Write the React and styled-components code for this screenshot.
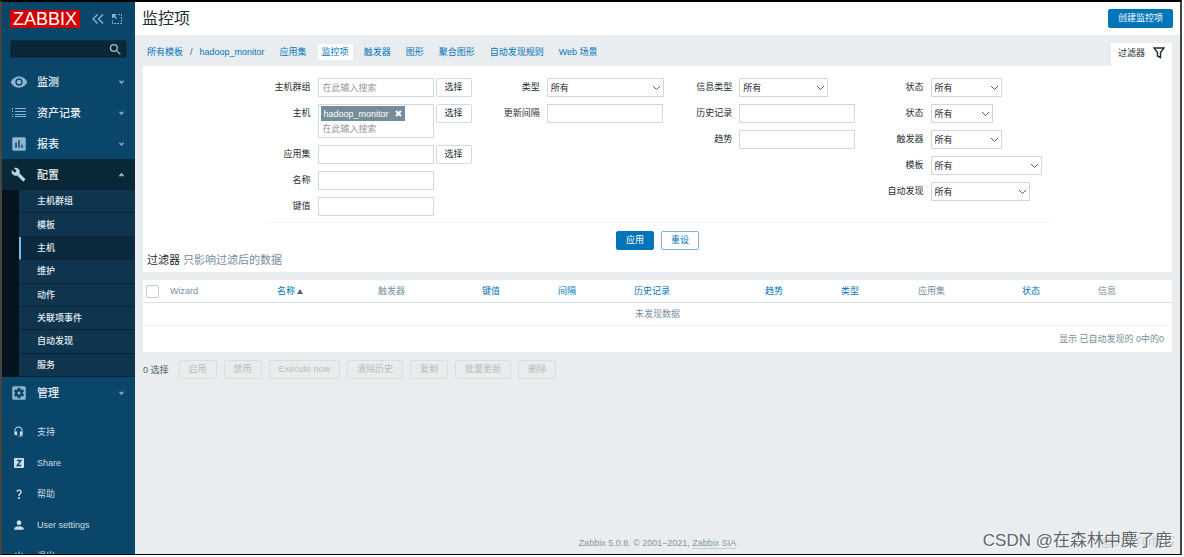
import React, { useState } from 'react';
import styled, { createGlobalStyle, css } from 'styled-components';
import {
  MdAssessment,
  MdBuild,
  MdHeadsetMic,
  MdPerson,
  MdPowerSettingsNew,
  MdQuestionMark,
  MdSearch,
  MdSettingsApplications,
  MdVisibility,
} from 'react-icons/md';

const ListIcon = () => (
  <svg width="14" height="10" viewBox="0 0 14 10" fill="currentColor">
    <path d="M0 0h1v2H0zM3 0h11v1H3zM0 3h1v1H0zM3 3h11v1H3zM0 6h1v1H0zM3 6h11v1H3zM0 8h1v1H0zM3 8h11v1H3z" />
  </svg>
);

const ShareIcon = () => (
  <svg width="10" height="10" viewBox="0 0 10 10">
    <rect width="10" height="10" rx="1" fill="currentColor" />
    <path d="M3 2.5h4L3.2 7.5H7.2" fill="none" stroke="#0a466a" strokeWidth="1.3" />
  </svg>
);

const Chevron = ({ up }) => (
  <svg width="5" height="4" viewBox="0 0 5 4" fill="none" stroke="currentColor" strokeWidth="1.3">
    <path d={up ? 'M.5 3.2l2-2.200 2 2.200' : 'M.5 .8l2 2.200 2-2.200'} />
  </svg>
);

const MENU = [
  { title: '监测', icon: <MdVisibility size={18} /> },
  { title: '资产记录', icon: <ListIcon /> },
  { title: '报表', icon: <MdAssessment size={18} /> },
  {
    title: '配置',
    icon: <MdBuild size={15} />,
    items: ['主机群组', '模板', '主机', '维护', '动作', '关联项事件', '自动发现', '服务'],
    selected: '主机',
  },
  { title: '管理', icon: <MdSettingsApplications size={18} /> },
];

const USER_MENU = [
  { title: '支持', icon: <MdHeadsetMic size={11} /> },
  { title: 'Share', icon: <ShareIcon /> },
  { title: '帮助', icon: <MdQuestionMark size={12} /> },
  { title: 'User settings', icon: <MdPerson size={14} /> },
  { title: '退出', icon: <MdPowerSettingsNew size={12} /> },
];

const TABS = ['应用集', '监控项', '触发器', '图形', '聚合图形', '自动发现规则', 'Web 场景'];

const COLUMNS = [
  { title: 'Wizard', width: 107 },
  { title: '名称', width: 101, sortable: true, sorted: true },
  { title: '触发器', width: 104 },
  { title: '键值', width: 76, sortable: true },
  { title: '间隔', width: 76, sortable: true },
  { title: '历史记录', width: 131, sortable: true },
  { title: '趋势', width: 76, sortable: true },
  { title: '类型', width: 77, sortable: true },
  { title: '应用集', width: 104 },
  { title: '状态', width: 76, sortable: true },
  { title: '信息', width: 79 },
];

const ACTIONS = ['启用', '禁用', 'Execute now', '清除历史', '复制', '批量更新', '删除'];

const SelectField = ({ id, label, width }) => (
  <>
    <Label htmlFor={id}>{label}</Label>
    <SelectBox $width={width}>
      <Select id={id} defaultValue="all">
        <option value="all">所有</option>
      </Select>
      <svg width="9" height="6" viewBox="0 0 9 6" fill="none" stroke="#52626c">
        <path d="M1 1l3.5 3.5L8 1" />
      </svg>
    </SelectBox>
  </>
);

const TextField = ({ id, label }) => (
  <>
    <Label htmlFor={id}>{label}</Label>
    <TextInput id={id} type="text" />
  </>
);

const PickerField = ({ id, label, placeholder, tag, onRemove }) => (
  <>
    <Label htmlFor={id}>{label}</Label>
    <Picker>
      <MultiSelect>
        {tag && (
          <Tag>
            {tag}
            <TagRemove type="button" aria-label="移除" onClick={onRemove}>
              <svg width="7" height="7" viewBox="0 0 7 7" stroke="#fff" strokeWidth="2">
                <path d="M1 1l5 5M6 1L1 6" />
              </svg>
            </TagRemove>
          </Tag>
        )}
        <MultiSelectInput id={id} type="text" placeholder={placeholder} />
      </MultiSelect>
      <Button type="button" $variant="grey">选择</Button>
    </Picker>
  </>
);

const Sidebar = () => (
  <SidebarContainer>
    <SidebarHeader>
      <Logo href="#">ZABBIX</Logo>
      <HeaderButton type="button" aria-label="收起">
        <svg width="12" height="10" viewBox="0 0 12 10" fill="none" stroke="currentColor" strokeWidth="1.3">
          <path d="M5.5 .5L1 5l4.5 4.5M11 .5L6.5 5l4.5 4.5" />
        </svg>
      </HeaderButton>
      <HeaderButton type="button" aria-label="隐藏">
        <svg width="10" height="10" viewBox="0 0 10 10" fill="none" stroke="currentColor">
          <path d="M6 .5h3.5v9H.5V6" strokeDasharray="2 1" />
          <path d="M.7 4V.7H4M1 1l3.500 3.500" strokeWidth="1.4" />
        </svg>
      </HeaderButton>
    </SidebarHeader>
    <SearchForm role="search">
      <SearchInput type="text" aria-label="搜索" />
      <MdSearch size={15} />
    </SearchForm>
    <nav>
      {MENU.map(({ title, icon, items, selected }) => (
        <React.Fragment key={title}>
          <MenuLink href="#" $active={!!items}>
            <IconContainer>{icon}</IconContainer>
            <MenuTitle>{title}</MenuTitle>
            <Chevron up={!!items} />
          </MenuLink>
          {items && (
            <SubMenu>
              {items.map((item) => (
                <SubMenuLink key={item} href="#" $selected={item === selected}>
                  {item}
                </SubMenuLink>
              ))}
            </SubMenu>
          )}
        </React.Fragment>
      ))}
    </nav>
    <UserNav>
      {USER_MENU.map(({ title, icon }) => (
        <UserLink key={title} href="#">
          <IconContainer>{icon}</IconContainer>
          {title}
        </UserLink>
      ))}
    </UserNav>
  </SidebarContainer>
);

const Filter = () => {
  const [host, setHost] = useState('hadoop_monitor');

  return (
    <FilterPanel>
      <FilterForm>
        <Fields>
          <FieldColumn>
            <PickerField id="groups" label="主机群组" placeholder="在此输入搜索" />
            <PickerField
              id="hosts"
              label="主机"
              placeholder="在此输入搜索"
              tag={host}
              onRemove={() => setHost('')}
            />
            <PickerField id="application" label="应用集" />
            <TextField id="name" label="名称" />
            <TextField id="key" label="键值" />
          </FieldColumn>
          <FieldColumn>
            <SelectField id="type" label="类型" width={117} />
            <TextField id="delay" label="更新间隔" />
          </FieldColumn>
          <FieldColumn>
            <SelectField id="value_type" label="信息类型" width={89} />
            <TextField id="history" label="历史记录" />
            <TextField id="trends" label="趋势" />
          </FieldColumn>
          <FieldColumn>
            <SelectField id="state" label="状态" width={71} />
            <SelectField id="status" label="状态" width={62} />
            <SelectField id="with_triggers" label="触发器" width={71} />
            <SelectField id="templated" label="模板" width={111} />
            <SelectField id="discovery" label="自动发现" width={99} />
          </FieldColumn>
        </Fields>
        <FormButtons>
          <Button type="button">应用</Button>
          <Button type="button" $variant="outline">重设</Button>
        </FormButtons>
      </FilterForm>
      <Hint>
        <strong>过滤器</strong> 只影响过滤后的数据
      </Hint>
    </FilterPanel>
  );
};

const ItemsTable = () => (
  <Table>
    <colgroup>
      <col width="22" />
      {COLUMNS.map(({ title, width }) => (
        <col key={title} width={width} />
      ))}
    </colgroup>
    <thead>
      <tr>
        <HeadCell $check>
          <Checkbox type="checkbox" aria-label="全选" />
        </HeadCell>
        {COLUMNS.map(({ title, sortable, sorted }) => (
          <HeadCell key={title}>
            {sortable ? <Link href="#">{title}</Link> : title}
            {sorted && (
              <SortArrow width="6" height="5" viewBox="0 0 6 5">
                <path d="M3 0l3 5H0z" fill="#52626c" />
              </SortArrow>
            )}
          </HeadCell>
        ))}
      </tr>
    </thead>
    <tbody>
      <tr>
        <EmptyCell colSpan={12}>未发现数据</EmptyCell>
      </tr>
    </tbody>
    <tfoot>
      <tr>
        <StatsCell colSpan={12}>显示 已自动发现的 0中的0</StatsCell>
      </tr>
    </tfoot>
  </Table>
);

const App = () => (
  <>
    <GlobalStyle />
    <Frame>
      <Sidebar />
      <Main>
        <PageHeader>
          <Title>监控项</Title>
          <Button type="button">创建监控项</Button>
        </PageHeader>
        <TopBar>
          <Breadcrumbs>
            <Link href="#">所有模板</Link>
            <span>/</span>
            <Link href="#">hadoop_monitor</Link>
          </Breadcrumbs>
          <Tabs>
            {TABS.map((tab) => (
              <Tab key={tab} href="#" $active={tab === '监控项'}>
                {tab}
              </Tab>
            ))}
          </Tabs>
          <FilterTab type="button">
            过滤器
            <svg width="12" height="12" viewBox="0 0 12 12" fill="none" stroke="#1f2c33" strokeWidth="1.4">
              <path d="M1 1h10L7.5 5.5v5L4.5 9V5.5z" />
            </svg>
          </FilterTab>
        </TopBar>
        <Content>
          <Filter />
          <ItemsTable />
          <ActionBar>
            <Selected>0 选择</Selected>
            {ACTIONS.map((action) => (
              <Button key={action} type="button" $variant="disabled" disabled>
                {action}
              </Button>
            ))}
          </ActionBar>
        </Content>
        <Footer>
          Zabbix 5.0.8. © 2001–2021, <a href="#">Zabbix SIA</a>
        </Footer>
      </Main>
      <SiteMark>@51CTO博客</SiteMark>
      <AuthorMark>CSDN @在森林中麋了鹿</AuthorMark>
    </Frame>
  </>
);

const GlobalStyle = createGlobalStyle`
  * {
    box-sizing: border-box;
  }

  body {
    margin: 0;
    background: #fff;
    color: #1f2c33;
    font-family: "Liberation Sans", "Noto Sans CJK SC", sans-serif;
    font-size: 9px;
    line-height: 14px;
  }

  button,
  input,
  select {
    margin: 0;
    font: inherit;
    color: inherit;
  }

  a {
    color: inherit;
    text-decoration: none;
  }

  svg {
    flex-shrink: 0;
  }
`;

const Frame = styled.div`
  position: relative;
  display: flex;
  height: calc(100vh - 2px);
  margin-right: 2px;
  overflow: hidden;
  border: 2px solid #444;
  border-top-color: #000;
  border-bottom: 1px solid #000;
`;

const SidebarContainer = styled.aside`
  display: flex;
  flex-flow: column nowrap;
  flex-shrink: 0;
  width: 133px;
  background: #0a466a;
  color: #e3ecf2;
`;

const SidebarHeader = styled.div`
  display: flex;
  align-items: center;
  gap: 8px;
  padding: 8px 8px 12px;
`;

const Logo = styled.a`
  width: 70px;
  margin-right: 4px;
  background: #d40000;
  color: #fff;
  font-size: 18px;
  line-height: 18px;
  text-align: center;
`;

const HeaderButton = styled.button`
  display: flex;
  padding: 0;
  border: 0;
  background: none;
  color: #8fb5ce;
`;

const SearchForm = styled.form`
  display: flex;
  align-items: center;
  height: 19px;
  margin: 0 8px 8px;
  padding-right: 3px;
  border: 1px solid #0c2f44;
  border-radius: 2px;
  background: #0a2638;
  color: #a5bccb;
`;

const SearchInput = styled.input`
  flex: 1;
  min-width: 0;
  border: 0;
  outline: 0;
  background: none;
`;

const MenuLink = styled.a`
  display: flex;
  align-items: center;
  height: 31px;
  padding-right: 11px;
  background: ${({ $active }) => ($active ? '#0a2737' : 'none')};
  color: ${({ $active }) => ($active ? '#b9d8ea' : '#8fb5ce')};
`;

const IconContainer = styled.span`
  display: flex;
  justify-content: center;
  width: 35px;
  padding-right: 2px;
`;

const MenuTitle = styled.span`
  flex: 1;
  color: #e9f0f5;
  font-size: 11px;
  font-weight: 500;
`;

const SubMenu = styled.div`
  display: grid;
  grid-auto-rows: 1fr;
  height: 187px;
  padding-left: 17px;
  background: #04131d;
`;

const SubMenuLink = styled.a`
  display: flex;
  align-items: center;
  padding-left: 16px;
  border-left: 2px solid ${({ $selected }) => ($selected ? '#78bbe6' : '#0f344d')};
  border-bottom: 1px solid #0a2432;
  background: ${({ $selected }) => ($selected ? '#0c2a3d' : '#0f344d')};
  font-weight: 500;
`;

const UserNav = styled.nav`
  padding-top: 8px;
`;

const UserLink = styled.a`
  display: flex;
  align-items: center;
  height: 31px;
  color: #d0dde6;
`;

const Main = styled.main`
  display: flex;
  flex: 1;
  flex-flow: column nowrap;
  min-width: 0;
  background: #e9edf0;
`;

const PageHeader = styled.header`
  display: flex;
  align-items: center;
  justify-content: space-between;
  height: 33px;
  padding: 0 7px;
  background: #fff;
`;

const Title = styled.h1`
  margin: 0;
  font-size: 16px;
  font-weight: 400;
  line-height: 24px;
`;

const variants = {
  primary: css`
    border-color: #0275b8;
    background: #0275b8;
    color: #fff;
  `,
  outline: css`
    border-color: #7ab4da;
    background: #fff;
    color: #0275b8;
  `,
  grey: css`
    padding: 0 8px;
    border-color: #d3dade;
    background: #fff;
  `,
  disabled: css`
    border-color: #d8dddf;
    background: #ebebeb;
    color: #b3bcc2;
  `,
};

const Button = styled.button`
  height: 19px;
  padding: 0 9px;
  border: 1px solid;
  border-radius: 2px;
  line-height: 17px;
  white-space: nowrap;
  ${({ $variant = 'primary' }) => variants[$variant]}
`;

const TopBar = styled.div`
  display: flex;
  align-items: center;
  height: 31px;
  padding: 3px 8px 0 12px;
`;

const Link = styled.a`
  color: #0275b8;
`;

const Breadcrumbs = styled.div`
  display: flex;
  gap: 7px;
  margin-right: 11px;
  color: #52626c;
`;

const Tabs = styled.nav`
  display: flex;
  flex: 1;
  gap: 7px;
`;

const Tab = styled.a`
  padding: 1px 4px;
  background: ${({ $active }) => ($active ? '#fff' : 'none')};
  color: #0275b8;
`;

const FilterTab = styled.button`
  display: flex;
  align-items: center;
  align-self: flex-end;
  gap: 8px;
  height: 23px;
  padding: 0 7px 4px;
  border: 0;
  background: #fff;
`;

const Content = styled.div`
  padding: 0 8px;
`;

const FilterPanel = styled.section`
  margin-bottom: 8px;
  padding: 12px 4px 4px;
  background: #fff;
`;

const FilterForm = styled.form`
  max-width: 784px;
  margin: 0 auto;
`;

const Fields = styled.div`
  display: flex;
  justify-content: space-between;
  padding: 0 8px 6px 0;
  border-bottom: 1px solid #f2f4f5;
`;

const FieldColumn = styled.div`
  display: grid;
  grid-template-columns: 45px auto;
  gap: 7px;
  align-content: start;
`;

const Label = styled.label`
  line-height: 19px;
  text-align: right;
  white-space: nowrap;
`;

const TextInput = styled.input`
  width: 116px;
  height: 19px;
  padding: 0 4px;
  border: 1px solid #d0d8dc;
  background: #fff;
`;

const SelectBox = styled.div`
  position: relative;
  width: ${({ $width }) => $width}px;

  svg {
    position: absolute;
    top: 7px;
    right: 3px;
    pointer-events: none;
  }
`;

const Select = styled.select`
  display: block;
  width: 100%;
  height: 19px;
  padding: 0 3px;
  border: 1px solid #d0d8dc;
  border-radius: 0;
  background: #fff;
  appearance: none;
`;

const Picker = styled.div`
  display: flex;
  align-items: flex-start;
  gap: 2px;
`;

const MultiSelect = styled.div`
  width: 116px;
  padding: 1px 2px;
  border: 1px solid #d0d8dc;
  background: #fff;
`;

const Tag = styled.span`
  display: inline-flex;
  align-items: center;
  gap: 6px;
  height: 15px;
  padding: 0 3px;
  background: #768d99;
  color: #fff;
  vertical-align: top;
`;

const TagRemove = styled.button`
  display: flex;
  padding: 0;
  border: 0;
  background: none;
`;

const MultiSelectInput = styled.input`
  display: block;
  width: 100%;
  height: 15px;
  padding: 0 2px;
  border: 0;
  outline: 0;
  background: none;

  &::placeholder {
    color: #96999b;
  }
`;

const FormButtons = styled.div`
  display: flex;
  justify-content: center;
  gap: 7px;
  padding: 8px 0 2px;
`;

const Hint = styled.div`
  color: #768d99;
  font-size: 11px;
  line-height: 16px;

  strong {
    color: #1f2c33;
    font-weight: 400;
  }
`;

const Table = styled.table`
  width: 100%;
  table-layout: fixed;
  border-collapse: separate;
  border-spacing: 0;
  background: #fff;
  color: #768d99;
`;

const HeadCell = styled.th`
  height: 23px;
  padding: ${({ $check }) => ($check ? '0 3px' : '0 5px')};
  border-bottom: 1px solid #d9dfe3;
  font-weight: 400;
  text-align: left;
`;

const SortArrow = styled.svg`
  margin-left: 2px;
`;

const Checkbox = styled.input`
  display: block;
  width: 13px;
  height: 13px;
  border: 1px solid #c3cdd3;
  border-radius: 2px;
  background: #fff;
  appearance: none;
`;

const EmptyCell = styled.td`
  height: 23px;
  padding: 0;
  border-bottom: 1px solid #f0f2f4;
  text-align: center;
`;

const StatsCell = styled.td`
  height: 26px;
  padding: 0 8px;
  text-align: right;
`;

const ActionBar = styled.div`
  display: flex;
  align-items: center;
  gap: 7px;
  padding-top: 8px;
`;

const Selected = styled.span`
  margin-right: 3px;
  color: #52626c;
`;

const Footer = styled.footer`
  margin-top: auto;
  padding-bottom: 4px;
  color: #8496a1;
  text-align: center;

  a {
    border-bottom: 1px solid #c3cdd3;
  }
`;

const SiteMark = styled.div`
  position: absolute;
  right: 5px;
  bottom: 5px;
  color: #c6cbce;
  font-size: 12px;
`;

const AuthorMark = styled.div`
  position: absolute;
  right: 8px;
  bottom: 2px;
  color: #62676a;
  font-size: 17px;
  line-height: 22px;
  text-shadow: 1px 1px 0 #fff;
`;

export default App;
